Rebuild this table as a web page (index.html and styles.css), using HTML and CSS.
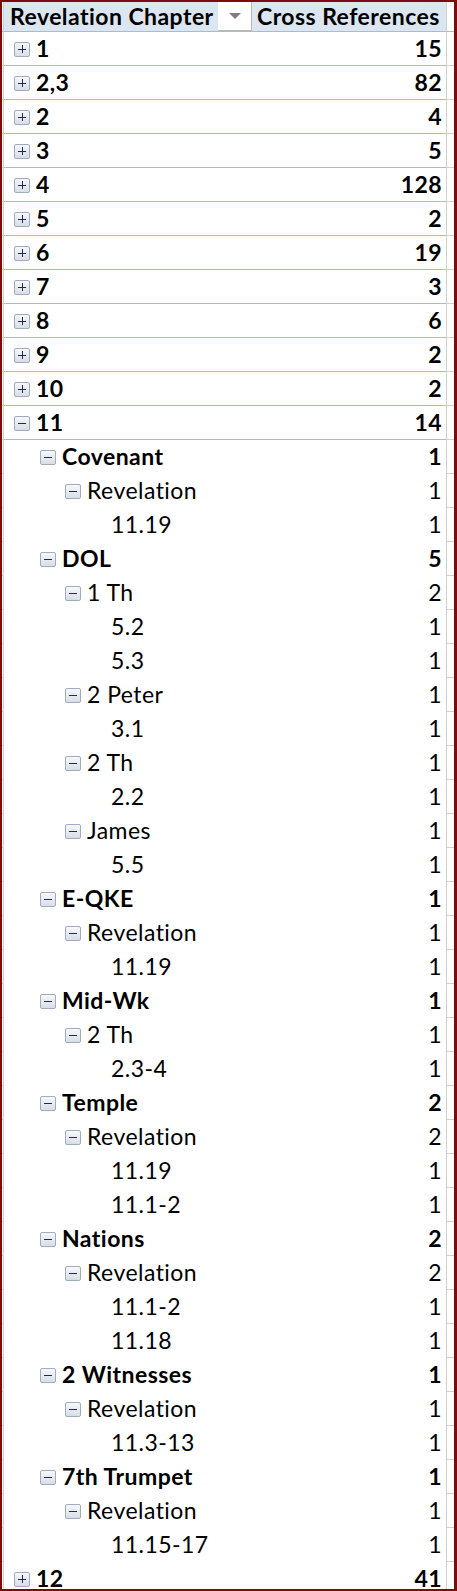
FILE: index.html
```html
<!DOCTYPE html>
<html>
<head>
<meta charset="utf-8">
<link rel="stylesheet" href="styles.css">
</head>
<body>
<div class="sheet">
  <div class="row head">
    <div class="gl"></div>
    <div class="main">
      <div class="hc1"><span class="htxt">Revelation Chapter</span><span class="dd"><svg width="12" height="7" viewBox="0 0 12 7"><polygon points="0,0 12,0 6,6" fill="#7f7f7f"/></svg></span></div>
      <div class="hc2">Cross References</div>
    </div>
    <div class="gr"></div>
  </div>

  <div class="row top"><div class="gl"></div><div class="main"><div class="lab l1"><span class="bx plus"></span><span class="t b">1</span></div><div class="val b">15</div></div><div class="gr"></div></div>
  <div class="row top"><div class="gl"></div><div class="main"><div class="lab l1"><span class="bx plus"></span><span class="t b">2,3</span></div><div class="val b">82</div></div><div class="gr"></div></div>
  <div class="row top"><div class="gl"></div><div class="main"><div class="lab l1"><span class="bx plus"></span><span class="t b">2</span></div><div class="val b">4</div></div><div class="gr"></div></div>
  <div class="row top"><div class="gl"></div><div class="main"><div class="lab l1"><span class="bx plus"></span><span class="t b">3</span></div><div class="val b">5</div></div><div class="gr"></div></div>
  <div class="row top"><div class="gl"></div><div class="main"><div class="lab l1"><span class="bx plus"></span><span class="t b">4</span></div><div class="val b">128</div></div><div class="gr"></div></div>
  <div class="row top"><div class="gl"></div><div class="main"><div class="lab l1"><span class="bx plus"></span><span class="t b">5</span></div><div class="val b">2</div></div><div class="gr"></div></div>
  <div class="row top"><div class="gl"></div><div class="main"><div class="lab l1"><span class="bx plus"></span><span class="t b">6</span></div><div class="val b">19</div></div><div class="gr"></div></div>
  <div class="row top"><div class="gl"></div><div class="main"><div class="lab l1"><span class="bx plus"></span><span class="t b">7</span></div><div class="val b">3</div></div><div class="gr"></div></div>
  <div class="row top"><div class="gl"></div><div class="main"><div class="lab l1"><span class="bx plus"></span><span class="t b">8</span></div><div class="val b">6</div></div><div class="gr"></div></div>
  <div class="row top"><div class="gl"></div><div class="main"><div class="lab l1"><span class="bx plus"></span><span class="t b">9</span></div><div class="val b">2</div></div><div class="gr"></div></div>
  <div class="row top"><div class="gl"></div><div class="main"><div class="lab l1"><span class="bx plus"></span><span class="t b">10</span></div><div class="val b">2</div></div><div class="gr"></div></div>
  <div class="row top"><div class="gl"></div><div class="main"><div class="lab l1"><span class="bx minus"></span><span class="t b">11</span></div><div class="val b">14</div></div><div class="gr"></div></div>

  <div class="row"><div class="gl"></div><div class="main"><div class="lab l2"><span class="bx minus"></span><span class="t b">Covenant</span></div><div class="val b">1</div></div><div class="gr"></div></div>
  <div class="row"><div class="gl"></div><div class="main"><div class="lab l3"><span class="bx minus"></span><span class="t">Revelation</span></div><div class="val">1</div></div><div class="gr"></div></div>
  <div class="row"><div class="gl"></div><div class="main"><div class="lab l4"><span class="t">11.19</span></div><div class="val">1</div></div><div class="gr"></div></div>

  <div class="row"><div class="gl"></div><div class="main"><div class="lab l2"><span class="bx minus"></span><span class="t b">DOL</span></div><div class="val b">5</div></div><div class="gr"></div></div>
  <div class="row"><div class="gl"></div><div class="main"><div class="lab l3"><span class="bx minus"></span><span class="t">1 Th</span></div><div class="val">2</div></div><div class="gr"></div></div>
  <div class="row"><div class="gl"></div><div class="main"><div class="lab l4"><span class="t">5.2</span></div><div class="val">1</div></div><div class="gr"></div></div>
  <div class="row"><div class="gl"></div><div class="main"><div class="lab l4"><span class="t">5.3</span></div><div class="val">1</div></div><div class="gr"></div></div>
  <div class="row"><div class="gl"></div><div class="main"><div class="lab l3"><span class="bx minus"></span><span class="t">2 Peter</span></div><div class="val">1</div></div><div class="gr"></div></div>
  <div class="row"><div class="gl"></div><div class="main"><div class="lab l4"><span class="t">3.1</span></div><div class="val">1</div></div><div class="gr"></div></div>
  <div class="row"><div class="gl"></div><div class="main"><div class="lab l3"><span class="bx minus"></span><span class="t">2 Th</span></div><div class="val">1</div></div><div class="gr"></div></div>
  <div class="row"><div class="gl"></div><div class="main"><div class="lab l4"><span class="t">2.2</span></div><div class="val">1</div></div><div class="gr"></div></div>
  <div class="row"><div class="gl"></div><div class="main"><div class="lab l3"><span class="bx minus"></span><span class="t">James</span></div><div class="val">1</div></div><div class="gr"></div></div>
  <div class="row"><div class="gl"></div><div class="main"><div class="lab l4"><span class="t">5.5</span></div><div class="val">1</div></div><div class="gr"></div></div>

  <div class="row"><div class="gl"></div><div class="main"><div class="lab l2"><span class="bx minus"></span><span class="t b">E-QKE</span></div><div class="val b">1</div></div><div class="gr"></div></div>
  <div class="row"><div class="gl"></div><div class="main"><div class="lab l3"><span class="bx minus"></span><span class="t">Revelation</span></div><div class="val">1</div></div><div class="gr"></div></div>
  <div class="row"><div class="gl"></div><div class="main"><div class="lab l4"><span class="t">11.19</span></div><div class="val">1</div></div><div class="gr"></div></div>

  <div class="row"><div class="gl"></div><div class="main"><div class="lab l2"><span class="bx minus"></span><span class="t b">Mid-Wk</span></div><div class="val b">1</div></div><div class="gr"></div></div>
  <div class="row"><div class="gl"></div><div class="main"><div class="lab l3"><span class="bx minus"></span><span class="t">2 Th</span></div><div class="val">1</div></div><div class="gr"></div></div>
  <div class="row"><div class="gl"></div><div class="main"><div class="lab l4"><span class="t">2.3-4</span></div><div class="val">1</div></div><div class="gr"></div></div>

  <div class="row"><div class="gl"></div><div class="main"><div class="lab l2"><span class="bx minus"></span><span class="t b">Temple</span></div><div class="val b">2</div></div><div class="gr"></div></div>
  <div class="row"><div class="gl"></div><div class="main"><div class="lab l3"><span class="bx minus"></span><span class="t">Revelation</span></div><div class="val">2</div></div><div class="gr"></div></div>
  <div class="row"><div class="gl"></div><div class="main"><div class="lab l4"><span class="t">11.19</span></div><div class="val">1</div></div><div class="gr"></div></div>
  <div class="row"><div class="gl"></div><div class="main"><div class="lab l4"><span class="t">11.1-2</span></div><div class="val">1</div></div><div class="gr"></div></div>

  <div class="row"><div class="gl"></div><div class="main"><div class="lab l2"><span class="bx minus"></span><span class="t b">Nations</span></div><div class="val b">2</div></div><div class="gr"></div></div>
  <div class="row"><div class="gl"></div><div class="main"><div class="lab l3"><span class="bx minus"></span><span class="t">Revelation</span></div><div class="val">2</div></div><div class="gr"></div></div>
  <div class="row"><div class="gl"></div><div class="main"><div class="lab l4"><span class="t">11.1-2</span></div><div class="val">1</div></div><div class="gr"></div></div>
  <div class="row"><div class="gl"></div><div class="main"><div class="lab l4"><span class="t">11.18</span></div><div class="val">1</div></div><div class="gr"></div></div>

  <div class="row"><div class="gl"></div><div class="main"><div class="lab l2"><span class="bx minus"></span><span class="t b">2 Witnesses</span></div><div class="val b">1</div></div><div class="gr"></div></div>
  <div class="row"><div class="gl"></div><div class="main"><div class="lab l3"><span class="bx minus"></span><span class="t">Revelation</span></div><div class="val">1</div></div><div class="gr"></div></div>
  <div class="row"><div class="gl"></div><div class="main"><div class="lab l4"><span class="t">11.3-13</span></div><div class="val">1</div></div><div class="gr"></div></div>

  <div class="row"><div class="gl"></div><div class="main"><div class="lab l2"><span class="bx minus"></span><span class="t b">7th Trumpet</span></div><div class="val b">1</div></div><div class="gr"></div></div>
  <div class="row"><div class="gl"></div><div class="main"><div class="lab l3"><span class="bx minus"></span><span class="t">Revelation</span></div><div class="val">1</div></div><div class="gr"></div></div>
  <div class="row"><div class="gl"></div><div class="main"><div class="lab l4"><span class="t">11.15-17</span></div><div class="val">1</div></div><div class="gr"></div></div>

  <div class="row top"><div class="gl"></div><div class="main"><div class="lab l1"><span class="bx plus"></span><span class="t b">12</span></div><div class="val b">41</div></div><div class="gr"></div></div>
</div>
</body>
</html>
```

FILE: styles.css
```css
html, body {
  margin: 0;
  padding: 0;
  background: #ffffff;
}

.sheet {
  box-sizing: border-box;
  width: 457px;
  height: 1591px;
  overflow: hidden;
  border-style: solid;
  border-color: #7f0a0a;
  border-width: 2px 3px 2px 2px;
  font-family: Lato, "Liberation Sans", sans-serif;
  font-size: 23px;
  letter-spacing: 0.45px;
  color: #000000;
  background: #ffffff;
}

.row {
  display: flex;
  height: 34px;
}

.gl {
  box-sizing: border-box;
  width: 2px;
  flex: 0 0 2px;
  border-right: 1px solid #d0d0d0;
  border-bottom: 1px solid #d0d0d0;
}

.gr {
  box-sizing: border-box;
  width: 8px;
  flex: 0 0 8px;
  border-left: 1px solid #d0d0d0;
  border-bottom: 1px solid #d0d0d0;
}

.main {
  box-sizing: border-box;
  width: 442px;
  flex: 0 0 442px;
  display: flex;
  align-items: center;
  line-height: 33px;
  height: 33px;
}

.row.top .main {
  height: 34px;
  border-bottom: 1px solid #a7bad6;
}

.row.head {
  height: 30px;
}

.row.head .main {
  height: 30px;
  line-height: 29px;
  background: #dce6f1;
  border-bottom: 1px solid #a7bad6;
  font-weight: bold;
}

.row.head .gl,
.row.head .gr {
  border-bottom: 1px solid #a7bad6;
}

.hc1 {
  display: flex;
  width: 248px;
  height: 29px;
  align-items: stretch;
}

.htxt {
  flex: 1;
  padding-left: 6px;
  white-space: nowrap;
  overflow: hidden;
}

.dd {
  box-sizing: border-box;
  width: 34px;
  height: 29px;
  background: #ffffff;
  border-right: 1px solid #b9b9b9;
  border-bottom: 1px solid #b9b9b9;
  display: flex;
  align-items: flex-start;
  justify-content: center;
  padding-top: 11px;
}

.dd svg {
  display: block;
}

.hc2 {
  flex: 1;
  padding-left: 5px;
  white-space: nowrap;
}

.lab {
  flex: 1;
  display: flex;
  align-items: center;
  white-space: nowrap;
}

.l1 { padding-left: 10px; }
.l2 { padding-left: 36px; }
.l3 { padding-left: 61px; }
.l4 { padding-left: 107px; }

.bx {
  box-sizing: border-box;
  position: relative;
  width: 16px;
  height: 15px;
  margin-right: 6px;
  margin-top: 1px;
  border: 1px solid #9eabc0;
  border-radius: 2px;
  background: linear-gradient(#f7f8fa, #d9dde5);
  flex: 0 0 16px;
}

.bx::before {
  content: "";
  position: absolute;
  left: 3px;
  right: 3px;
  top: 6px;
  height: 1px;
  background: #1d2b55;
}

.bx.plus::after {
  content: "";
  position: absolute;
  top: 2px;
  bottom: 3px;
  left: 7px;
  width: 1px;
  background: #1d2b55;
}

.t {
  display: block;
}

.b {
  font-weight: bold;
}

.val {
  padding-right: 4px;
  text-align: right;
  white-space: nowrap;
}
```
